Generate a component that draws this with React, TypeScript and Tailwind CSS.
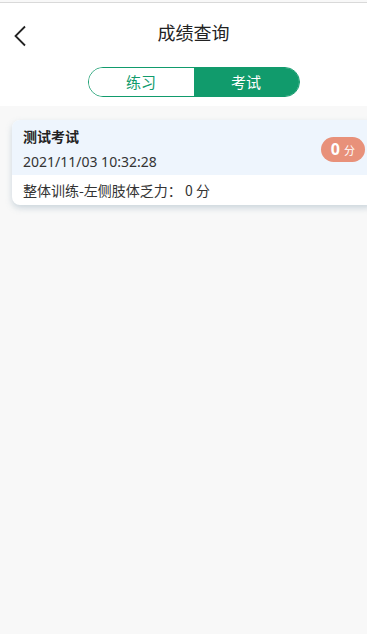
import React from "react";

export default function App() {
  return (
    <div
      className="w-[367px] h-[634px] bg-[#f8f8f8] overflow-hidden"
      style={{ fontFamily: '"Noto Sans", "Noto Sans CJK SC", sans-serif' }}
    >
      <div className="w-[387px] flex flex-col">
        <div className="bg-white border-t border-[#d9d9d9] mt-[2px]">
          <div className="relative h-[60px] flex items-center justify-center">
            <svg
              className="absolute left-[13px] top-[22px]"
              width="14"
              height="22"
              viewBox="0 0 14 22"
              fill="none"
            >
              <path d="M12 1.5 L2.5 11 L12 20.5" stroke="#222" strokeWidth="1.8" />
            </svg>
            <span className="text-[18px] text-[#222] mt-[1px]">成绩查询</span>
          </div>
          <div className="flex justify-center pt-[4px] pb-[9px]">
            <div className="flex w-[212px] h-[30px] rounded-full border border-[#119b6c] overflow-hidden">
              <div className="flex-1 flex items-center justify-center text-[15px] text-[#119b6c] bg-white">
                练习
              </div>
              <div className="flex-1 flex items-center justify-center text-[15px] text-white bg-[#119b6c]">
                考试
              </div>
            </div>
          </div>
        </div>
        <div className="pt-[14px] px-[12px]">
          <div className="rounded-[8px] overflow-hidden bg-white shadow-[0_3px_6px_rgba(120,150,170,0.35)]">
            <div className="bg-[#eef5fd] flex items-center pl-[11px] pr-[10px] pt-[6px] pb-[1px]">
              <div className="flex-1 flex flex-col">
                <span className="text-[14px] font-bold text-[#222] leading-[22px]">测试考试</span>
                <span className="text-[14px] text-[#333] leading-[24px] mt-[2px]">2021/11/03 10:32:28</span>
              </div>
              <div className="h-[25px] px-[10px] rounded-full bg-[#e8917a] flex items-baseline justify-center gap-[4px] text-white mb-[2px]">
                <span className="text-[16px] font-bold leading-[25px]">0</span>
                <span className="text-[11px] leading-[25px]">分</span>
              </div>
            </div>
            <div
              className="pl-[11px] h-[30px] flex items-center text-[14px] text-[#333]"
              style={{ fontFamily: '"Noto Sans CJK SC", sans-serif' }}
            >
              整体训练-左侧肢体乏力： 0 分
            </div>
          </div>
        </div>
      </div>
    </div>
  );
}
